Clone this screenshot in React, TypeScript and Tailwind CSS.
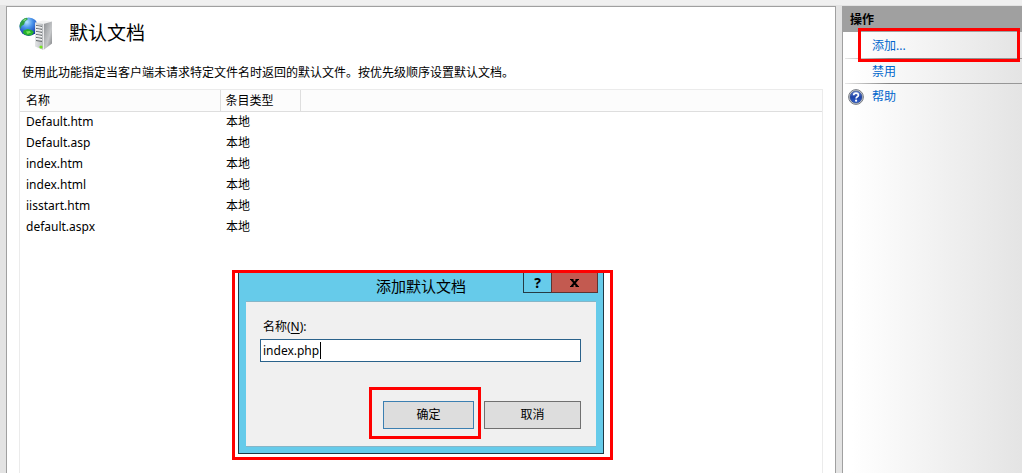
const documents = [
  { name: 'Default.htm', type: '本地' },
  { name: 'Default.asp', type: '本地' },
  { name: 'index.htm', type: '本地' },
  { name: 'index.html', type: '本地' },
  { name: 'iisstart.htm', type: '本地' },
  { name: 'default.aspx', type: '本地' },
]

const ServerIcon = () => (
  <svg width="34" height="34" viewBox="0 0 34 34" className="shrink-0" aria-hidden="true">
    <defs>
      <radialGradient id="globe" cx="0.4" cy="0.25" r="0.8">
        <stop offset="0" stopColor="#b5e4ff" />
        <stop offset="0.4" stopColor="#4791ea" />
        <stop offset="1" stopColor="#0a2496" />
      </radialGradient>
      <linearGradient id="front" x1="0" x2="1" y1="0" y2="0">
        <stop offset="0" stopColor="#e4e6e7" />
        <stop offset="1" stopColor="#b5b9bc" />
      </linearGradient>
      <linearGradient id="side" x1="0" x2="1" y1="0" y2="1">
        <stop offset="0" stopColor="#8b8e91" />
        <stop offset="0.6" stopColor="#c6c8ca" />
        <stop offset="1" stopColor="#77797c" />
      </linearGradient>
    </defs>
    <circle cx="9.7" cy="9.7" r="9.3" fill="url(#globe)" />
    <path d="M1.2 6C2.5 3 5 1.2 7.5 .8L9 2 6 4.5 5 7.5 2.5 9 1.5 12 .5 9Z" fill="#2f9f45" />
    <path d="M4 3l3-1.5L7.5 2.5 5 4.5Z" fill="#7fd67c" />
    <path d="M4.5 13.5l4-1.5 4 1 2.5 2-2 3C9 19.5 5.5 18 4 16Z" fill="#25b12e" />
    <path d="M7 14.5l3.5-.5 1.5 1.5-3.5 1.5Z" fill="#79e45a" />
    <path d="M16 5.5L24 3.5l9 1-8 2.5Z" fill="#f1f2f2" />
    <path d="M16 5.5l8.5 1.5v26l-8.5-3.5Z" fill="url(#front)" />
    <path d="M24.5 7l8.5-2.5v22l-8.5 6.5Z" fill="url(#side)" />
    <path d="M17 8.5l6 1M17 11.5l6 1M17 14.5l6 1M17 17.5l6 1M17 20.5l6 1M17 23.5l6 1" stroke="#65696c" />
    <path d="M17 9.5l6 1M17 12.5l6 1M17 15.5l6 1M17 18.5l6 1M17 21.5l6 1" stroke="#fafafa" />
    <path d="M24.5 7v26" stroke="#f5f5f5" strokeWidth="0.8" />
    <circle cx="22" cy="30" r="1.6" fill="#75e51c" />
  </svg>
)

const HelpIcon = () => (
  <svg width="16" height="16" viewBox="0 0 16 16" className="shrink-0" aria-hidden="true">
    <defs>
      <linearGradient id="help" x1="0" x2="0" y1="0" y2="1">
        <stop offset="0" stopColor="#6b8ad8" />
        <stop offset="0.5" stopColor="#1d42a8" />
        <stop offset="1" stopColor="#3463ce" />
      </linearGradient>
    </defs>
    <circle cx="8" cy="8" r="7.4" fill="#d5d7da" stroke="#777b82" />
    <circle cx="8" cy="8" r="6" fill="url(#help)" stroke="#29437f" strokeWidth="0.6" />
    <path d="M5.7 6.3C5.7 3.4 10.4 3.5 10.4 6.2 10.4 7.8 8.1 7.8 8.1 9.5" fill="none" stroke="#fff" strokeWidth="1.7" />
    <circle cx="8.1" cy="11.7" r="1.1" fill="#fff" />
  </svg>
)

const Separator = () => (
  <div className="ml-0.5 h-px bg-linear-to-r from-[#e8e8e8] via-[#858585] via-25% to-[#999999]" />
)

const ActionsPane = () => (
  <aside className="w-[180px] shrink-0 border-l border-[#a0a0a0] bg-linear-to-r from-white from-5% to-[#e4e4e4]">
    <h2 className="flex h-[26px] items-center bg-[#a0a0a0] pt-0.5 pl-[7px] font-bold">操作</h2>
    <nav className="text-[#0066cc]">
      <div className="relative flex h-[26px] items-center pt-0.5 pl-[29px]">
        <a href="#add">添加...</a>
        <div className="absolute -top-1 right-0.5 left-[15px] h-[34px] border-[3px] border-[#ff0000]" />
      </div>
      <Separator />
      <div className="flex h-6 items-center pt-0.5 pl-[29px]">
        <a href="#disable">禁用</a>
      </div>
      <Separator />
      <div className="flex h-6 items-center gap-2 pt-0.5 pl-[5px]">
        <HelpIcon />
        <a href="#help">帮助</a>
      </div>
    </nav>
  </aside>
)

const AddDocumentDialog = () => (
  <div className="absolute top-[270px] left-[232px] w-[381px] border-[3px] border-[#ff0000] bg-white pr-1.5 pb-[3px] pl-[3px]">
    <div role="dialog" aria-labelledby="dialog-title" className="border-x border-b border-[#1f3a47] bg-[#66cbea] px-[7px] pb-1.5">
      <div className="relative flex h-7 items-center justify-center pb-0.5">
        <h2 id="dialog-title" className="text-[15px]">添加默认文档</h2>
        <div className="absolute top-0 -right-0.5 flex h-5 text-sm leading-none font-bold">
          <button type="button" aria-label="帮助" className="w-7 border-b border-l border-[#253b45]">?</button>
          <button type="button" aria-label="关闭" className="flex w-[47px] items-center justify-center border-x border-b border-[#5c3432] bg-[#c35a50]">
            <svg width="9" height="8" viewBox="0 0 9 8" aria-hidden="true">
              <path d="M1.5 .5l6 7M7.5 .5l-6 7" stroke="#000" strokeWidth="2" />
              <path d="M0 .5h3.5M5.5 .5H9M0 7.5h3.5M5.5 7.5H9" stroke="#000" />
            </svg>
          </button>
        </div>
      </div>
      <form className="border-y border-[#86b6c8] bg-[#f0f0f0] pt-[15px] pr-[15px] pb-[17px] pl-3.5">
        <label htmlFor="document-name" className="block pl-[3px] leading-5">
          名称(<u className="underline-offset-2">N</u>):
        </label>
        <div className="relative mt-0.5">
          <input
            id="document-name"
            type="text"
            defaultValue="index.php"
            className="block h-[23px] w-full border border-[#2a628b] bg-white px-0.5 outline-none"
          />
          <span className="absolute top-[3px] left-[60px] h-[17px] w-px bg-black" />
        </div>
        <div className="mt-[39px] flex justify-end gap-2.5">
          <div className="relative">
            <button type="button" className="block h-7 w-[91px] border border-[#3c7fb1] bg-[#dddddd]">确定</button>
            <div className="pointer-events-none absolute -top-3.5 -right-[7px] -bottom-2.5 -left-3.5 border-[3px] border-[#ff0000]" />
          </div>
          <button type="button" className="h-7 w-[97px] border border-[#707070] bg-[#dddddd]">取消</button>
        </div>
      </form>
    </div>
  </div>
)

const App = () => {
  return (
    <div className="relative flex min-h-screen bg-[#e3e3e3] pl-1.5 font-['Noto_Sans','Noto_Sans_CJK_SC',sans-serif] text-xs text-black">
      <div className="absolute inset-x-0 top-0 h-[5px] bg-[#f0f0f0]" />
      <div className="flex grow gap-1.5 pt-1.5">
        <main className="flex grow flex-col border-x border-t border-[#a0a0a0] bg-white px-3">
          <header className="flex h-[54px] items-center gap-4">
            <ServerIcon />
            <h1 className="text-[19px]">默认文档</h1>
          </header>
          <p className="pl-[3px] leading-6">使用此功能指定当客户端未请求特定文件名时返回的默认文件。按优先级顺序设置默认文档。</p>
          <div className="mt-1 grow border-x border-t border-[#ebebeb]">
            <table className="w-full table-fixed border-collapse text-left">
              <thead className="bg-[#fcfcfc]">
                <tr className="h-[21px] border-b border-[#dedede]">
                  <th className="w-[200px] border-r border-[#dedede] pt-0.5 pl-1.5 font-normal">名称</th>
                  <th className="w-20 border-r border-[#dedede] pt-0.5 pl-[5px] font-normal">条目类型</th>
                  <th />
                </tr>
              </thead>
              <tbody>
                {documents.map((doc) => (
                  <tr key={doc.name} className="h-[21px]">
                    <td className="pl-1.5">{doc.name}</td>
                    <td className="pl-1.5">{doc.type}</td>
                    <td />
                  </tr>
                ))}
              </tbody>
            </table>
          </div>
        </main>
        <ActionsPane />
      </div>
      <AddDocumentDialog />
    </div>
  )
}

export default App
